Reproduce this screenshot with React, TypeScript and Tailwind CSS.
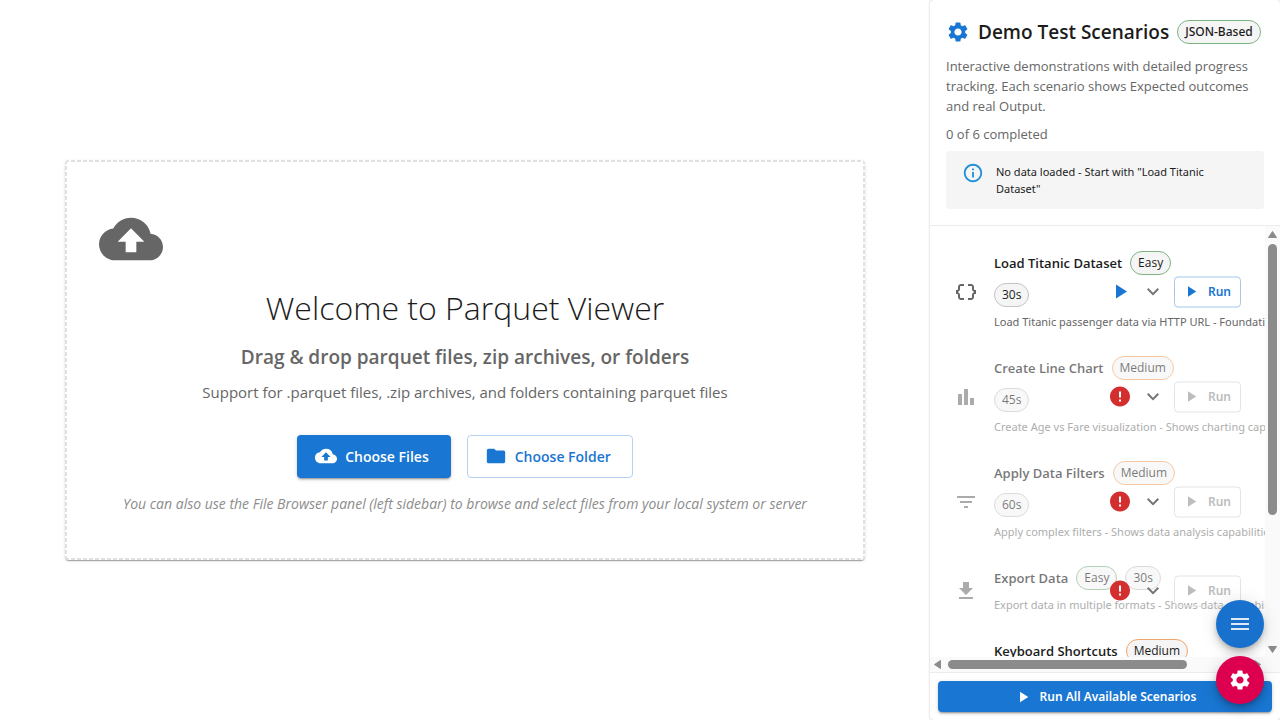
import type { ReactNode } from "react";
import {
  MdBarChart,
  MdCloudUpload,
  MdDataObject,
  MdError,
  MdExpandMore,
  MdFileDownload,
  MdFilterList,
  MdFolder,
  MdKeyboard,
  MdMenu,
  MdOutlineInfo,
  MdPlayArrow,
  MdSettings,
} from "react-icons/md";

type Scenario = {
  title: string;
  level: "Easy" | "Medium";
  time: string;
  description: string;
  icon: ReactNode;
  locked: boolean;
};

const scenarios: Scenario[] = [
  {
    title: "Load Titanic Dataset",
    level: "Easy",
    time: "30s",
    description: "Load Titanic passenger data via HTTP URL - Foundation",
    icon: <MdDataObject size={24} />,
    locked: false,
  },
  {
    title: "Create Line Chart",
    level: "Medium",
    time: "45s",
    description: "Create Age vs Fare visualization - Shows charting capabilities",
    icon: <MdBarChart size={24} />,
    locked: true,
  },
  {
    title: "Apply Data Filters",
    level: "Medium",
    time: "60s",
    description: "Apply complex filters - Shows data analysis capabilities",
    icon: <MdFilterList size={24} />,
    locked: true,
  },
  {
    title: "Export Data",
    level: "Easy",
    time: "30s",
    description: "Export data in multiple formats - Shows data portability",
    icon: <MdFileDownload size={24} />,
    locked: true,
  },
  {
    title: "Keyboard Shortcuts",
    level: "Medium",
    time: "20s",
    description: "Navigate the viewer with the keyboard",
    icon: <MdKeyboard size={24} />,
    locked: false,
  },
];

function Chip({ tone, children }: { tone: "Easy" | "Medium" | "plain"; children: ReactNode }) {
  const border =
    tone === "Easy" ? "border-[#7fb283]" : tone === "Medium" ? "border-[#f0a56b]" : "border-[#c4c4c4]";
  return (
    <span
      className={`flex h-6 items-center rounded-full border bg-[#f5f5f5] px-[7px] text-[12px] text-[#1c1c1c] ${border}`}
    >
      {children}
    </span>
  );
}

function ScenarioRow({ item }: { item: Scenario }) {
  return (
    <li className="relative flex items-center py-3 pr-12 pl-4">
      <div className={`flex min-w-0 flex-1 items-center ${item.locked ? "opacity-60" : ""}`}>
        <span className={`w-10 shrink-0 ${item.locked ? "text-[#757575]" : "text-[#666666]"}`}>{item.icon}</span>
        <div className="min-w-0 flex-1">
          <div className="mb-[5px] flex flex-wrap items-center gap-2">
            <h3 className="text-[13px] leading-6 font-semibold text-[#1c1c1c]">{item.title}</h3>
            <Chip tone={item.level}>{item.level}</Chip>
            <Chip tone="plain">{item.time}</Chip>
          </div>
          <p
            className={`font-['Noto_Sans',sans-serif] text-[11px] leading-5 whitespace-nowrap ${item.locked ? "text-[#777777]" : "text-[#666666]"}`}
          >
            {item.description}
          </p>
        </div>
      </div>
      <div className="absolute top-1/2 right-4 flex -translate-y-1/2 items-center">
        {item.locked ? (
          <MdError size={24} className="text-[#d32f2f]" />
        ) : (
          <MdPlayArrow size={24} className="text-[#1976d2]" />
        )}
        <button type="button" aria-label={`Show ${item.title} details`} className="mx-[9px] text-[#757575]">
          <MdExpandMore size={24} />
        </button>
        <button
          type="button"
          disabled={item.locked}
          className="flex h-[31px] items-center gap-2 rounded border border-[#a3c8ed] pr-[9px] pl-[7px] font-['Noto_Sans',sans-serif] text-[12px] font-semibold text-[#1976d2] disabled:border-[#e4e4e4] disabled:text-[#bdbdbd]"
        >
          <MdPlayArrow size={18} />
          Run
        </button>
      </div>
    </li>
  );
}

function Arrow({ points }: { points: string }) {
  return (
    <svg width="15" height="15" viewBox="0 0 15 15" className="shrink-0" aria-hidden="true">
      <polygon points={points} fill="#8b8b8b" stroke="#8b8b8b" strokeWidth="1" strokeLinejoin="round" />
    </svg>
  );
}

function Welcome() {
  return (
    <main className="flex min-w-0 flex-1 items-center justify-center bg-white p-4">
      <section className="flex min-h-[400px] w-full max-w-[800px] flex-col justify-center rounded border-2 border-transparent bg-[repeating-linear-gradient(90deg,#e0e0e0_0_4px,transparent_4px_6px),repeating-linear-gradient(90deg,#e0e0e0_0_4px,transparent_4px_6px),repeating-linear-gradient(180deg,#e0e0e0_0_4px,transparent_4px_6px),repeating-linear-gradient(180deg,#e0e0e0_0_4px,transparent_4px_6px)] [background-size:100%_2px,100%_2px,2px_100%,2px_100%] bg-origin-border [background-position:top,bottom,left,right] bg-no-repeat px-8 text-center shadow-[0_2px_1px_-1px_rgba(0,0,0,0.2),0_1px_1px_0_rgba(0,0,0,0.14),0_1px_3px_0_rgba(0,0,0,0.12)]">
        <MdCloudUpload size={64} className="mb-4 text-[#666666]" />
        <h1 className="mb-3 text-[32px] leading-[42px] font-light text-[#1c1c1c]">Welcome to Parquet Viewer</h1>
        <h2 className="mb-[7px] text-[19px] leading-8 font-semibold text-[#666666]">
          Drag &amp; drop parquet files, zip archives, or folders
        </h2>
        <p className="mb-[31px] text-[15px] leading-6 text-[#666666]">
          Support for .parquet files, .zip archives, and folders containing parquet files
        </p>
        <div className="mb-4 flex justify-center gap-4">
          <button
            type="button"
            className="flex h-[43px] items-center gap-2 rounded bg-[#1976d2] pr-[22px] pl-[18px] text-[14px] font-semibold text-white shadow-[0_3px_1px_-2px_rgba(0,0,0,0.2),0_2px_2px_0_rgba(0,0,0,0.14),0_1px_5px_0_rgba(0,0,0,0.12)]"
          >
            <MdCloudUpload size={22} />
            Choose Files
          </button>
          <button
            type="button"
            className="flex h-[43px] items-center gap-2 rounded border border-[#b5d2f0] pr-[21px] pl-[17px] text-[14px] font-semibold text-[#1976d2]"
          >
            <MdFolder size={22} />
            Choose Folder
          </button>
        </div>
        <p className="text-[14px] leading-5 text-[#8c8c8c] italic">
          You can also use the File Browser panel (left sidebar) to browse and select files from your local system or
          server
        </p>
      </section>
    </main>
  );
}

function ScenarioPanel() {
  return (
    <aside className="flex w-[350px] shrink-0 flex-col rounded bg-white shadow-[0_0_2px_rgba(0,0,0,0.3)]">
      <header className="border-b border-[#ececec] p-4">
        <div className="mb-2 flex h-8 items-center gap-2">
          <MdSettings size={24} className="shrink-0 text-[#1976d2]" />
          <h2 className="text-[19px] font-semibold whitespace-nowrap text-[#1c1c1c]">Demo Test Scenarios</h2>
          <span className="flex h-6 items-center rounded-full border border-[#7fb283] bg-[#f5f5f5] px-[7px] font-['Noto_Sans',sans-serif] text-[12px] font-medium whitespace-nowrap text-[#1c1c1c]">
            JSON-Based
          </span>
        </div>
        <p className="mb-2 text-[13px] leading-5 text-[#666666]">
          Interactive demonstrations with detailed progress tracking. Each scenario shows Expected outcomes and real
          Output.
        </p>
        <p className="mb-[7px] text-[13px] leading-5 text-[#666666]">0 of 6 completed</p>
        <div role="status" className="flex gap-3 rounded bg-[#f5f5f5] px-4 py-3">
          <MdOutlineInfo size={22} className="-mt-px shrink-0 text-[#1f8fd8]" />
          <p className="font-['Noto_Sans',sans-serif] text-[11px] leading-[17px] text-[#1c1c1c]">
            No data loaded - Start with "Load Titanic Dataset"
          </p>
        </div>
      </header>

      <div className="grid min-h-0 flex-1 grid-cols-[1fr_15px] grid-rows-[1fr_15px]">
        <div className="min-h-0 min-w-0 overflow-hidden px-2 pt-[13px]">
          <ul>
            {scenarios.map((item) => (
              <ScenarioRow key={item.title} item={item} />
            ))}
          </ul>
        </div>
        <div className="flex flex-col items-center bg-[#fafafa]">
          <Arrow points="7.5,5.5 11.5,11.5 3.5,11.5" />
          <div className="flex min-h-0 w-[9px] flex-1 flex-col pt-[3px]">
            <div className="h-[68%] rounded-full bg-[#8b8b8b]" />
          </div>
          <Arrow points="3.5,4.5 11.5,4.5 7.5,10.5" />
        </div>
        <div className="flex items-center bg-[#fafafa]">
          <Arrow points="4.5,7.5 10.5,3.5 10.5,11.5" />
          <div className="flex h-[9px] min-w-0 flex-1 pl-[3px]">
            <div className="w-[79%] rounded-full bg-[#8b8b8b]" />
          </div>
          <Arrow points="4.5,3.5 10.5,7.5 4.5,11.5" />
        </div>
        <div className="bg-[#fafafa]" />
      </div>

      <footer className="border-t border-[#ececec] p-2">
        <button
          type="button"
          className="flex h-[31px] w-full items-center justify-center gap-2 rounded bg-[#1976d2] font-['Noto_Sans',sans-serif] text-[12px] font-semibold text-white shadow-[0_3px_1px_-2px_rgba(0,0,0,0.2),0_2px_2px_0_rgba(0,0,0,0.14),0_1px_5px_0_rgba(0,0,0,0.12)]"
        >
          <MdPlayArrow size={18} />
          Run All Available Scenarios
        </button>
      </footer>
    </aside>
  );
}

export default function App() {
  return (
    <div className="flex h-screen overflow-hidden bg-white font-['Open_Sans','Noto_Sans',sans-serif]">
      <Welcome />
      <ScenarioPanel />
      <div className="fixed right-4 bottom-4 flex flex-col gap-2">
        <button
          type="button"
          aria-label="Open menu"
          className="flex size-12 items-center justify-center rounded-full bg-[#1971ce] text-[#dfeaf7] shadow-[0_3px_5px_-1px_rgba(0,0,0,0.2),0_6px_10px_0_rgba(0,0,0,0.14),0_1px_18px_0_rgba(0,0,0,0.12)]"
        >
          <MdMenu size={24} />
        </button>
        <button
          type="button"
          aria-label="Open settings"
          className="flex size-12 items-center justify-center rounded-full bg-[#dc004e] text-white shadow-[0_3px_5px_-1px_rgba(0,0,0,0.2),0_6px_10px_0_rgba(0,0,0,0.14),0_1px_18px_0_rgba(0,0,0,0.12)]"
        >
          <MdSettings size={24} />
        </button>
      </div>
    </div>
  );
}
